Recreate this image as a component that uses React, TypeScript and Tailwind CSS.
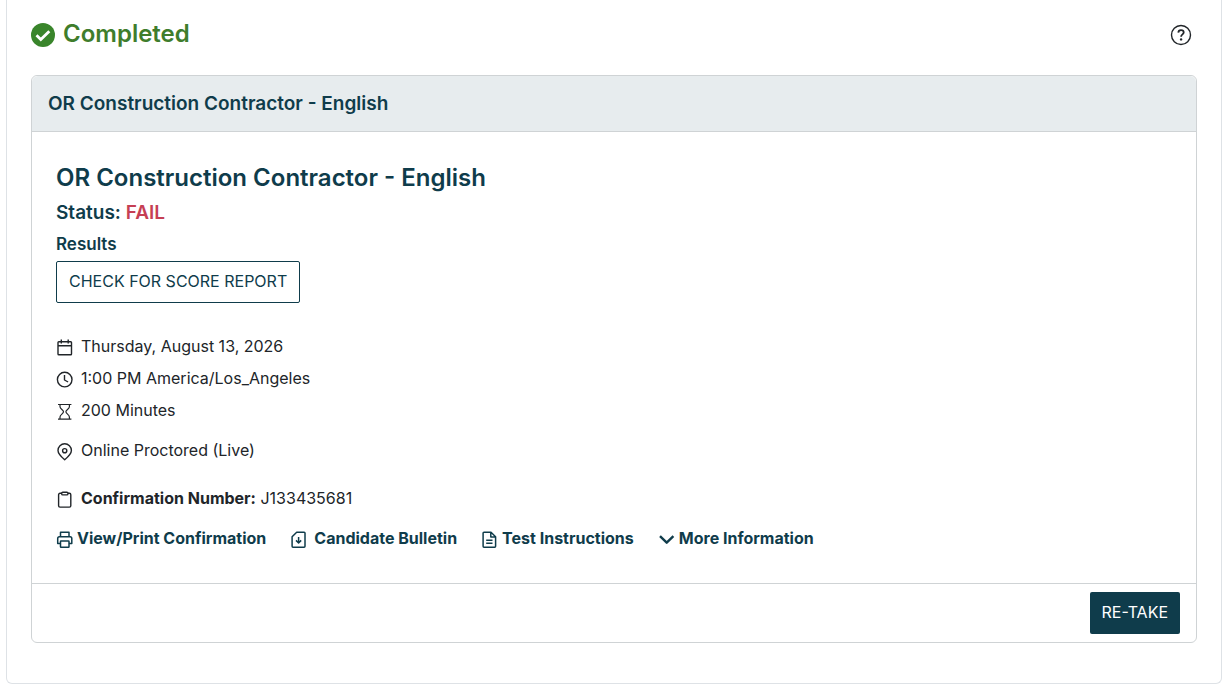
import type { ReactNode } from "react";

type IconProps = {
  children: ReactNode;
  strokeWidth?: number;
};

function Icon({ children, strokeWidth = 1.5 }: IconProps) {
  return (
    <svg
      viewBox="0 0 18 18"
      fill="none"
      stroke="currentColor"
      strokeWidth={strokeWidth}
      strokeLinejoin="round"
      aria-hidden="true"
      className="mt-[5px] size-[18px] shrink-0"
    >
      {children}
    </svg>
  );
}

const details = [
  {
    text: "Thursday, August 13, 2026",
    icon: (
      <Icon strokeWidth={1.4}>
        <rect x="2" y="2.800" width="13.500" height="13" rx="0.800" />
        <path d="M2 6.700h13.500M5.300 0.600v3.800M12.200 0.600v3.800" />
      </Icon>
    ),
  },
  {
    text: "1:00 PM America/Los_Angeles",
    icon: (
      <Icon strokeWidth={1.4}>
        <circle cx="8.700" cy="8.600" r="7.300" />
        <path d="M8.500 4v5l3.600 2" />
      </Icon>
    ),
  },
  {
    text: "200 Minutes",
    icon: (
      <Icon strokeWidth={1.2}>
        <path d="M2 1.500h13.400M2 16.200h13.400M4 1.500v2.200c0 2.300 3.500 3.200 3.500 5.100S4 11.700 4 14v2.200M13.400 1.500v2.200c0 2.300-3.500 3.200-3.500 5.100s3.500 2.900 3.500 5.200v2.200" />
      </Icon>
    ),
  },
];

const actions = [
  {
    label: "View/Print Confirmation",
    gap: "gap-[3px]",
    icon: (
      <Icon>
        <path d="M4.500 5.800V1.300h8.500v4.500M4.500 12.500H1.700V7.600c0-1 .7-1.800 1.700-1.800h10.700c1 0 1.700.8 1.700 1.800v4.900H13" />
        <rect x="4.500" y="10" width="8.500" height="6.200" rx="0.500" />
      </Icon>
    ),
  },
  {
    label: "Candidate Bulletin",
    gap: "gap-[6px]",
    icon: (
      <Icon>
        <path d="M6.700 1.200h7.400c.5 0 .9.400.9.900v13.200c0 .5-.4.900-.9.900H3a.9.9 0 0 1-.9-.9V5.700zM8.600 6v6M6 9.400l2.600 2.600 2.600-2.600" />
      </Icon>
    ),
  },
  {
    label: "Test Instructions",
    gap: "gap-[3px]",
    icon: (
      <Icon>
        <path d="M3 1.200h7l4.600 4.500v9.600c0 .5-.4.900-.9.900H3a.9.9 0 0 1-.9-.9V2.100c0-.5.400-.9.900-.9zM9.800 1.200v4.800h4.800M5.200 9.200h6.300M5.200 12.200h6.300" />
      </Icon>
    ),
  },
  {
    label: "More Information",
    gap: "gap-[3px]",
    icon: (
      <Icon strokeWidth={2.4}>
        <path d="M2 5.200l6.700 6.500 6.700-6.500" />
      </Icon>
    ),
  },
];

function ExamDetails() {
  return (
    <div className="mt-[31px] flex flex-col text-[#212529]">
      <ul className="flex flex-col gap-2">
        {details.map((item) => (
          <li key={item.text} className="flex gap-[7px]">
            {item.icon}
            {item.text}
          </li>
        ))}
      </ul>
      <p className="mt-4 flex gap-[7px]">
        <Icon strokeWidth={1.4}>
          <path d="M8.700 16.700C4.700 13.400 2 10.700 2 7.500a6.700 6.700 0 0 1 13.400 0c0 3.200-2.700 5.900-6.700 9.200z" />
          <circle cx="8.700" cy="7.700" r="2.100" />
        </Icon>
        Online Proctored (Live)
      </p>
      <p className="mt-6 flex gap-[7px]">
        <Icon strokeWidth={1.4}>
          <path d="M5.500 2.300H4a1.400 1.400 0 0 0-1.400 1.400v11A1.400 1.400 0 0 0 4 16.100h9.400a1.400 1.400 0 0 0 1.400-1.400v-11a1.400 1.400 0 0 0-1.400-1.400H12" />
          <rect x="5.700" y="1.200" width="6.200" height="2.700" rx="1" />
        </Icon>
        <span>
          <strong className="font-bold">Confirmation Number:</strong> J133435681
        </span>
      </p>
    </div>
  );
}

export default function App() {
  return (
    <main className="bg-white px-1.5 pb-3 font-['Inter',sans-serif] text-base text-[#0f3c4b]">
      <section className="mr-0.5 rounded-b-md border border-t-0 border-[#dee2e6] px-6 pb-10">
        <header className="flex h-[75px] items-start justify-between pt-[18px]">
          <h1 className="flex items-center gap-2 text-2xl font-semibold text-[#3f7d2c]">
            <svg viewBox="0 0 24 24" className="mt-0.5 size-6" aria-hidden="true">
              <circle cx="12" cy="12" r="12" fill="#39852b" />
              <path d="M5.500 12.300l4.300 4.300 8.500-8.400" fill="none" stroke="#fff" strokeWidth="2.800" />
            </svg>
            Completed
          </h1>
          <button type="button" aria-label="Help" className="mt-1.5 mr-[5px] text-[#212529]">
            <svg viewBox="0 0 22 22" className="size-[22px]" fill="none" stroke="currentColor" aria-hidden="true">
              <circle cx="11" cy="11" r="9.500" strokeWidth="1.400" />
              <path d="M8.300 8.600c.1-1.600 1.200-2.500 2.700-2.500s2.700.9 2.700 2.300c0 1.900-2.600 2-2.600 4.300" strokeWidth="1.800" />
              <circle cx="11.100" cy="15.400" r="1.200" fill="currentColor" stroke="none" />
            </svg>
          </button>
        </header>

        <article className="rounded-md border border-[#cfd3d5]">
          <h2 className="rounded-t-md border-b border-[#cfd3d5] bg-[#e7ecee] px-4 py-[14px] text-[19px] leading-[27px] font-semibold">
            OR Construction Contractor - English
          </h2>

          <div className="px-6 pt-[30px] pb-[33px]">
            <h3 className="text-2xl leading-8 font-semibold">OR Construction Contractor - English</h3>
            <p className="mt-[5px] text-[19px] leading-7 font-semibold">
              Status: <span className="text-[#c63f54]">FAIL</span>
            </p>
            <h4 className="mt-[5px] text-[17px] leading-6 font-semibold">Results</h4>
            <button
              type="button"
              className="mt-[5px] rounded-xs border border-[#0f3c4b] px-3 pt-[7px] pb-[9px] leading-6 whitespace-nowrap"
            >
              CHECK FOR SCORE REPORT
            </button>

            <ExamDetails />

            <nav className="mt-4 flex flex-wrap gap-x-6 font-bold">
              {actions.map((action) => (
                <a key={action.label} href="#" className={`flex ${action.gap}`}>
                  {action.icon}
                  {action.label}
                </a>
              ))}
            </nav>
          </div>

          <footer className="flex justify-end border-t border-[#cfd3d5] px-4 py-2">
            <button type="button" className="rounded-xs bg-[#0f3c4b] px-3 pt-2 pb-[10px] leading-6 text-white">
              RE-TAKE
            </button>
          </footer>
        </article>
      </section>
    </main>
  );
}
